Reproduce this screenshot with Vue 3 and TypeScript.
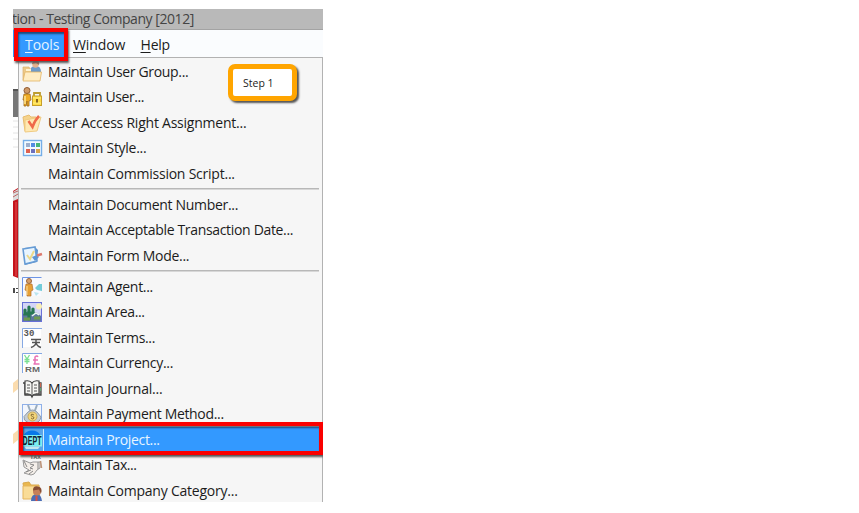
<script setup lang="ts">
interface MenuItem {
  label: string
  icon?: string
  spacing: number
  active?: boolean
}

const groups: MenuItem[][] = [
  [
    { label: 'Maintain User Group...', icon: 'group', spacing: -0.33 },
    { label: 'Maintain User...', icon: 'user', spacing: -0.4 },
    { label: 'User Access Right Assignment...', icon: 'access', spacing: -0.23 },
    { label: 'Maintain Style...', icon: 'style', spacing: -0.28 },
    { label: 'Maintain Commission Script...', spacing: -0.23 },
  ],
  [
    { label: 'Maintain Document Number...', spacing: -0.3 },
    { label: 'Maintain Acceptable Transaction Date...', spacing: -0.33 },
    { label: 'Maintain Form Mode...', icon: 'form', spacing: -0.3 },
  ],
  [
    { label: 'Maintain Agent...', icon: 'agent', spacing: -0.29 },
    { label: 'Maintain Area...', icon: 'area', spacing: -0.35 },
    { label: 'Maintain Terms...', icon: 'terms', spacing: -0.35 },
    { label: 'Maintain Currency...', icon: 'currency', spacing: -0.3 },
    { label: 'Maintain Journal...', icon: 'journal', spacing: -0.21 },
    { label: 'Maintain Payment Method...', icon: 'payment', spacing: -0.33 },
    { label: 'Maintain Project...', icon: 'project', spacing: -0.32, active: true },
    { label: 'Maintain Tax...', icon: 'tax', spacing: -0.42 },
    { label: 'Maintain Company Category...', icon: 'category', spacing: -0.23 },
  ],
]
</script>

<template>
  <main class="window">
    <header class="title">tion - Testing Company [2012]</header>
    <nav class="bar">
      <span class="tools"><u>T</u>ools</span>
      <span class="win"><u>W</u>indow</span>
      <span class="help"><u>H</u>elp</span>
    </nav>
    <div class="body">
      <aside class="behind">
        <svg width="5" height="445" viewBox="0 57 5 445">
          <rect y="57" width="5" height="445" fill="#fff" />
          <rect y="89" width="5" height="28" fill="#777" />
          <rect y="89" width="5" height="2" fill="#555" />
          <path d="M0 121h5M0 127h5M0 133h5M0 139h5M0 147h5" stroke="#e4e4e4" />
          <path d="M0 191l5-3v90l-5-2z" fill="#c4141c" />
          <path d="M0 192l5-3v10l-5 2z" fill="#ddd" />
          <path d="M0 193l5-2M0 197l5-3" stroke="#b66" />
          <path d="M3 202v74" stroke="#e65050" />
          <path d="M1 288v5M4 288v1M4 292v1" stroke="#111" stroke-width="1.5" />
          <path d="M0 383l5-4v10l-5 4zM0 434l5-4v10l-5 4z" fill="#fbdcae" />
        </svg>
      </aside>
      <section class="menu">
        <template v-for="(group, g) in groups" :key="g">
          <div v-if="g > 0" class="separator"></div>
          <div v-for="item in group" :key="item.label" class="row" :class="{ active: item.active }">
            <span class="slot">
              <svg v-if="item.icon" width="20" height="20" viewBox="0 0 20 20">
                <g v-if="item.icon === 'group'">
                  <path d="M1 5h6l1 2h5l1 11H1z" fill="#ecc98a" stroke="#dcb068" stroke-width=".7" />
                  <path d="M9 10V6q1-2 5-2 5 0 5 6z" fill="#6f9bc9" />
                  <circle cx="13.5" cy="2.5" r="3.2" fill="#e5b28d" />
                  <path d="M10 2q0-3 4-3 4 0 3 4l-3-2z" fill="#a87a62" />
                  <path d="M3 10h16.500l-1.500 9H1z" fill="#ffedc4" stroke="#e3b566" stroke-width=".8" />
                  <path d="M4 8h5" stroke="#fff3d2" stroke-width="2" />
                </g>
                <g v-else-if="item.icon === 'user'">
                  <circle cx="5" cy="3.500" r="3" fill="#cf9a68" stroke="#925b32" />
                  <path d="M2 7h6l1 6-2 1v5H5v-5l-1 5H2v-6H1z" fill="#efab25" stroke="#9d681b" stroke-width=".8" />
                  <path d="M3 9v8" stroke="#ffe690" stroke-width="1.5" />
                  <path d="M12 10V6h6v4" fill="none" stroke="#bd9c30" stroke-width="1.8" />
                  <rect x="10.500" y="9" width="9" height="9.500" fill="#ffdb45" stroke="#c69f2c" />
                  <path d="M11 11h8M11 16h8" stroke="#fff086" />
                  <path d="M15 12v3.500" stroke="#886620" stroke-width="2" />
                </g>
                <g v-else-if="item.icon === 'access'">
                  <path d="M1 4l6-2 2 2h5l1 13-12 1z" fill="#f5d38c" stroke="#e8bd70" />
                  <path d="M3 7l16-3-4 14-12 1z" fill="#ffe9b4" stroke="#f0cb82" />
                  <path d="M6.500 8l4 6Q13 7 17 3" fill="none" stroke="#ef6a4a" stroke-width="2.500" />
                </g>
                <g v-else-if="item.icon === 'style'">
                  <rect x="1.500" y="2.500" width="18" height="15" fill="#f3faff" stroke="#75aee8" stroke-width="1.400" />
                  <path d="M4 5h4v4H4z" fill="#9daecc" /><path d="M9 5h4v4H9z" fill="#548de3" />
                  <path d="M14 5h4v4h-4z" fill="#48b678" /><path d="M4 11h4v4H4z" fill="#df604d" />
                  <path d="M9 11h4v4H9z" fill="#6d70bd" /><path d="M14 11h4v4h-4z" fill="#d9a44b" />
                </g>
                <g v-else-if="item.icon === 'form'">
                  <path d="M2 2l11-1 3 3-1 12-12 3z" fill="#5e91cb" />
                  <path d="M1 3l12-2 2 14-12 3z" fill="#e8f5ff" stroke="#679cd5" stroke-width="1.6" />
                  <path d="M5 9l3 4 4-8" fill="none" stroke="#ecd98a" stroke-width="2" />
                  <path d="M10 11l5-2 2 2-4 4z" fill="#5d94d3" /><path d="M15 9.500l5-1.500" stroke="#dc796d" stroke-width="2.500" />
                </g>
                <g v-else-if="item.icon === 'agent'">
                  <path d="M1 1h18v18H1z" fill="#f7f9ff" /><path d="M.5 19.500V.5h19" fill="none" stroke="#6d94e5" />
                  <circle cx="7" cy="4" r="2.500" fill="#d79f68" stroke="#96633d" />
                  <path d="M4 7h6l1 6-2 1v5H5v-5l-2-1z" fill="#e7a036" stroke="#b16d2d" stroke-width=".7" />
                  <path d="M5 9v9" stroke="#ffe09b" />
                  <path d="M13 11l4-4h3v7l-5-1z" fill="#72cbd8" /><path d="M12 15l5 1-3 3z" fill="#b8e4ef" />
                </g>
                <g v-else-if="item.icon === 'area'">
                  <rect x=".5" y=".5" width="19" height="19" fill="#d4d5f6" stroke="#6770d7" />
                  <circle cx="17" cy="4.500" r="3" fill="#f8eeb5" /><path d="M1 12l5-3 4 2 4-1 5 4v5H1z" fill="#5c789c" />
                  <path d="M7 17V5M7 12H3V8M7 11h4V7" fill="none" stroke="#267752" stroke-width="3.200" stroke-linecap="round" />
                  <path d="M2 17h6M12 16h6" stroke="#6e9a50" stroke-width="3" /><path d="M10 14l4-3 3 2" fill="none" stroke="#ebf5ef" stroke-width="1.500" />
                </g>
                <g v-else-if="item.icon === 'terms'">
                  <rect x="1" y="1" width="18" height="18" fill="#fff" /><path d="M.5 20V.5H20" fill="none" stroke="#86a9e4" />
                  <text x="1.500" y="8" class="pixel small">30</text>
                  <path d="M9 11.500h10M10 14.500h8M14 11.500v3q0 3-5 5M14 14.500q1 4 5 5" fill="none" stroke="#555" stroke-width="1.400" />
                </g>
                <g v-else-if="item.icon === 'currency'">
                  <rect x="1" y="1" width="18" height="18" fill="#fff" /><path d="M.5 20V.5H20" fill="none" stroke="#82a6e3" />
                  <path d="M2.500 2l2.500 4 2.500-4M5 6v5M2.500 6.500h5M2.500 8.500h5" fill="none" stroke="#7be091" stroke-width="1.300" />
                  <path d="M16 4q-1-2-3 0v5q0 2-1.500 2h6M11 7h5" fill="none" stroke="#e873b5" stroke-width="1.500" />
                  <text x="3" y="18.500" textLength="15" lengthAdjust="spacingAndGlyphs" class="rm">RM</text>
                </g>
                <g v-else-if="item.icon === 'journal'">
                  <path d="M1 4h2v12h6l1 2 1-2h8V4h-2" fill="#aaa" stroke="#444" stroke-width="1.300" />
                  <path d="M3 2q5-1 7 2 2-3 7-2v13q-5-1-7 2-2-3-7-2z" fill="#f6f6f3" stroke="#444" stroke-width="1.200" />
                  <path d="M10 4v13M5 6h3M5 9h3M5 12h3M12 6h3M12 9h3M12 12h3" stroke="#555" />
                  <path d="M18.500 4v4" stroke="#cb674d" /><path d="M18.500 9v3" stroke="#61a578" />
                </g>
                <g v-else-if="item.icon === 'payment'">
                  <rect x=".5" y=".5" width="19" height="19" fill="#f2f6fd" stroke="#8fb0e8" />
                  <path d="M6 1l3 8M15 1l-3 8" stroke="#9aacbd" stroke-width="2" />
                  <path d="M6 8q4.500-4 9 0l4 5q-1 5-5 5.500H6q-5-2-4-6z" fill="#c5ccd3" stroke="#909ca9" />
                  <circle cx="10.500" cy="12.500" r="4.500" fill="#f2d57a" stroke="#c9ab5c" />
                  <path d="M12 11q-3-2-3 0c0 2 3 1 3 3q-1 2-3 0" fill="none" stroke="#8b7139" />
                </g>
                <g v-else-if="item.icon === 'project'">
                  <rect x="-1" y="-1" width="22" height="22" fill="#5aa5e8" />
                  <path d="M2 5Q4 .5 10 .5T18 5z" fill="#0878e9" />
                  <rect y="5" width="20" height="11.500" fill="#7ceff1" />
                  <path d="M2 16.500h16l-2 2.500H4z" fill="#c4e6ef" />
                  <text transform="translate(.5 15) scale(1 1.350)" textLength="19" lengthAdjust="spacingAndGlyphs" class="dept">DEPT</text>
                  <path d="M21.500-1v22" stroke="#d2eafa" />
                </g>
                <g v-else-if="item.icon === 'tax'">
                  <text x="8" y="3.500" class="pixel tax">TAX</text>
                  <path d="M1 5l7 3 3-1h7v6l-3 2-3 4-3 1-7-2 5-3-5-3z" fill="#f4efea" stroke="#999" />
                  <path d="M2 6l3 6M8 9l4 1-4 3 3 1M16 7v7M4 17l5-2M7 19l4-3" fill="none" stroke="#888" />
                  <path d="M18.500 6l1 7" stroke="#bd9378" stroke-width="1.500" />
                </g>
                <g v-else>
                  <path d="M1 2l6-1 2 3h8v12l-14 1z" fill="#eab84e" stroke="#d9a84c" />
                  <path d="M1 5h16v13H1z" fill="#f9dc97" stroke="#e5b55c" />
                  <path d="M9 20q0-7 6-7 4 0 5 7z" fill="#4b6eb6" />
                  <circle cx="15" cy="10.500" r="4" fill="#c58058" /><path d="M11 9.500q0-5 5-4 5 1 3 7l-2-4z" fill="#874d34" />
                  <path d="M14.500 15v5" stroke="#d94f41" stroke-width="2" />
                </g>
              </svg>
            </span>
            <span class="label" :style="{ letterSpacing: item.spacing + 'px' }">{{ item.label }}</span>
          </div>
        </template>
      </section>
    </div>
    <div class="outline tools-outline"></div>
    <div class="outline project-outline"></div>
    <div class="step">Step 1</div>
  </main>
</template>

<style>
body { background: #fff; overflow: hidden; }
</style>

<style scoped>
.window {
  position: relative;
  box-sizing: border-box;
  width: 310px;
  height: 493px;
  margin: 9px 0 0 13px;
  overflow: hidden;
  font-family: "Open Sans", "Noto Sans", sans-serif;
  font-size: 14px;
  color: #1c1c1c;
}
.title {
  box-sizing: border-box;
  height: 21px;
  border-bottom: 1px solid #a3a3a3;
  background: #b9b9b9;
  color: #444;
  line-height: 20px;
  letter-spacing: -.45px;
  text-indent: -1px;
  white-space: nowrap;
}
.bar {
  display: flex;
  height: 27px;
  line-height: 30px;
  letter-spacing: -.1px;
  background: #fafcfe;
}
.bar u { text-underline-offset: 2px; text-decoration-thickness: 1px; }
.tools { box-sizing: border-box; width: 52px; padding-left: 12px; margin-right: 8px; background: #3399ff; color: #e4f3ff; }
.win { width: 67.5px; }
.help { letter-spacing: -.2px; }
.body { display: flex; height: 445px; }
.behind { width: 5px; flex: none; }
.behind svg { display: block; }
.menu {
  box-sizing: border-box;
  width: 305px;
  height: 445px;
  padding-top: 1px;
  overflow: hidden;
  background: #f6f6f6;
  border: solid #b2b2b2;
  border-width: 1px 1px 0;
}
.row { display: flex; align-items: center; height: 25.5px; }
.active { background: #3399ff; color: #e8f5ff; }
.slot { width: 29px; padding-left: 3px; box-sizing: border-box; flex: none; }
.slot svg { display: block; overflow: visible; }
.label { white-space: nowrap; line-height: 23px; padding-bottom: 1.5px; }
.separator {
  height: 5.5px;
  margin: 0 3px 0 2px;
  background: linear-gradient(#b8b8b8, #b8b8b8) 0 1px / 100% 1.5px no-repeat;
}
.outline {
  position: absolute;
  box-sizing: border-box;
  border: 4px solid #fa0000;
  box-shadow: 1px 2px 2px #555, inset 1px 2px 2px rgba(20, 30, 50, .65);
}
.tools-outline { left: 1px; top: 19px; width: 54px; height: 33px; }
.project-outline { left: 6px; top: 413px; width: 304px; height: 33px; }
.step {
  position: absolute;
  box-sizing: border-box;
  left: 215px;
  top: 55px;
  width: 69px;
  height: 37px;
  padding-left: 10px;
  border: 5.5px solid #ffa500;
  border-radius: 7px;
  background: #fff;
  box-shadow: 2px 2px 2px #555;
  font-size: 10.5px;
  line-height: 28px;
}
.pixel { font-family: "Liberation Mono", monospace; font-weight: bold; fill: #555; letter-spacing: 0; }
.small { font-size: 9px; }
.rm { font: bold 8px "Liberation Sans", sans-serif; fill: #666; }
.dept { font: bold 9px "Liberation Sans", sans-serif; fill: #123; }
.tax { font-size: 6px; }
</style>
